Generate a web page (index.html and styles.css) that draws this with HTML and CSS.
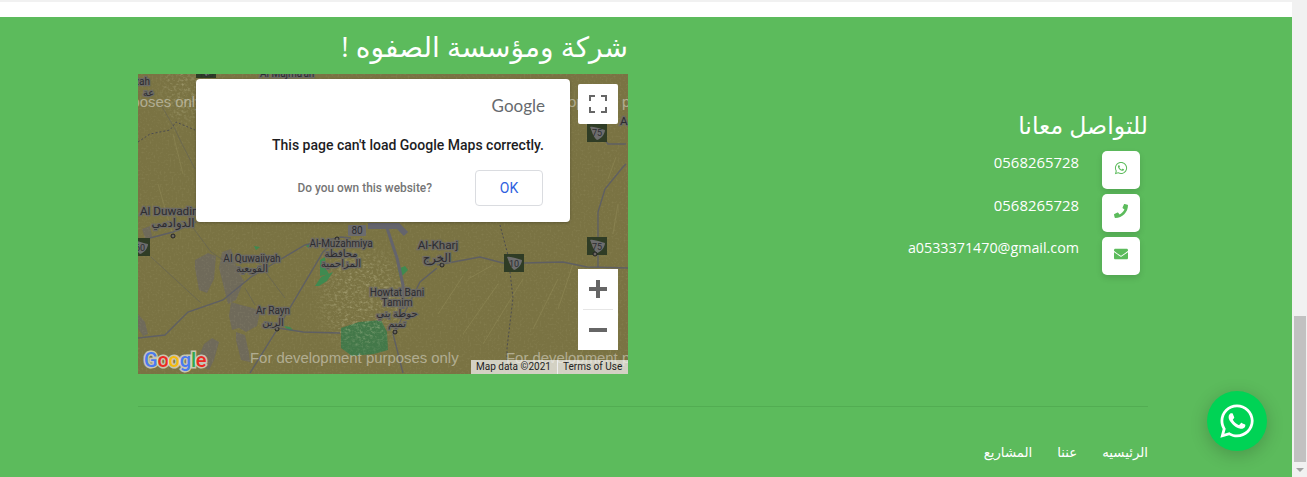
FILE: index.html
```html
<!DOCTYPE html>
<html lang="ar">
<head>
<meta charset="utf-8">
<title>شركة ومؤسسة الصفوه</title>
<link rel="stylesheet" href="styles.css">
</head>
<body>
<div class="window">
  <div class="page">
    <div class="top-strip"></div>
    <footer class="footer">
      <div class="columns">
        <section class="contact">
          <h3 class="contact-title">للتواصل معانا</h3>
          <ul class="contact-list">
            <li class="contact-row">
              <span class="contact-icon"><svg viewBox="0 0 448 512" class="fa"><path d="M380.9 97.1C339 55.1 283.2 32 223.9 32c-122.4 0-222 99.6-222 222 0 39.1 10.2 77.3 29.6 111L0 480l117.7-30.9c32.4 17.7 68.9 27 106.1 27h.1c122.3 0 224.1-99.6 224.1-222 0-59.3-25.2-115-67.1-157zm-157 341.6c-33.2 0-65.7-8.9-94-25.7l-6.7-4-69.8 18.3L72 359.2l-4.4-7c-18.5-29.4-28.2-63.3-28.2-98.2 0-101.7 82.8-184.5 184.6-184.5 49.3 0 95.6 19.2 130.4 54.1 34.8 34.9 56.2 81.2 56.1 130.5 0 101.8-84.9 184.6-186.6 184.6zm101.2-138.2c-5.5-2.8-32.8-16.2-37.9-18-5.1-1.9-8.8-2.8-12.5 2.8-3.7 5.6-14.3 18-17.6 21.8-3.2 3.7-6.5 4.2-12 1.4-32.6-16.3-54-29.1-75.5-66-5.7-9.8 5.7-9.1 16.3-30.3 1.8-3.7.9-6.9-.5-9.7-1.4-2.8-12.5-30.1-17.1-41.2-4.5-10.8-9.1-9.3-12.5-9.5-3.2-.2-6.9-.2-10.6-.2-3.7 0-9.7 1.4-14.8 6.9-5.1 5.6-19.4 19-19.4 46.3 0 27.3 19.9 53.7 22.6 57.4 2.8 3.7 39.1 59.7 94.8 83.8 35.2 15.2 49 16.5 66.6 13.9 10.7-1.6 32.8-13.4 37.4-26.4 4.6-13 4.6-24.1 3.2-26.4-1.3-2.5-5-3.9-10.5-6.6z"/></svg></span>
              <span class="contact-text" dir="ltr">0568265728</span>
            </li>
            <li class="contact-row">
              <span class="contact-icon"><svg viewBox="0 0 512 512" class="fa"><path d="M493.4 24.6l-104-24c-11.3-2.6-22.9 3.3-27.5 13.9l-48 112c-4.2 9.8-1.4 21.3 6.9 28l60.6 49.6c-36 76.7-98.9 140.5-177.2 177.2l-49.6-60.6c-6.8-8.3-18.2-11.1-28-6.9l-112 48C3.9 366.5-2 378.1.6 389.4l24 104C27.1 504.2 36.7 512 48 512c256.1 0 464-207.5 464-464 0-11.2-7.7-20.9-18.6-23.4z"/></svg></span>
              <span class="contact-text" dir="ltr">0568265728</span>
            </li>
            <li class="contact-row">
              <span class="contact-icon"><svg viewBox="0 0 512 512" class="fa"><path d="M502.3 190.8c3.9-3.1 9.7-.2 9.7 4.7V400c0 26.5-21.5 48-48 48H48c-26.5 0-48-21.5-48-48V195.6c0-5 5.7-7.8 9.7-4.7 22.4 17.4 52.1 39.5 154.1 113.6 21.1 15.4 56.7 47.8 92.2 47.6 35.7.3 72-32.8 92.3-47.6 102-74.1 131.6-96.3 154-113.7zM256 320c23.2.4 56.6-29.2 73.4-41.4 132.7-96.3 142.8-104.7 173.4-128.7 5.8-4.5 9.2-11.5 9.2-18.9v-19c0-26.5-21.5-48-48-48H48C21.5 64 0 85.5 0 112v19c0 7.4 3.4 14.3 9.2 18.9 30.6 23.9 40.7 32.4 173.4 128.7 16.8 12.2 50.2 41.8 73.4 41.4z"/></svg></span>
              <span class="contact-text email" dir="ltr">a0533371470@gmail.com</span>
            </li>
          </ul>
        </section>
        <section class="company">
          <h2 class="company-title">شركة ومؤسسة الصفوه !</h2>
          <div class="map" dir="ltr">
            <svg class="map-canvas" viewBox="0 0 490 300" width="490" height="300">
              <defs>
                <filter id="grain" x="0" y="0" width="100%" height="100%">
                  <feTurbulence type="fractalNoise" baseFrequency="0.5" numOctaves="2" seed="4"/>
                  <feColorMatrix type="matrix" values="0 0 0 0 0.7  0 0 0 0 0.66  0 0 0 0 0.42  0 0 0 1.1 -0.55"/>
                </filter>
                <filter id="ridge" x="-30%" y="-30%" width="160%" height="160%">
                  <feGaussianBlur in="SourceAlpha" stdDeviation="9" result="soft"/>
                  <feTurbulence type="fractalNoise" baseFrequency="0.28 0.4" numOctaves="3" seed="11"/>
                  <feColorMatrix type="matrix" values="0 0 0 0 0.8  0 0 0 0 0.78  0 0 0 0 0.52  0 0 0 2 -0.95"/>
                  <feComposite operator="in" in2="soft"/>
                </filter>
                <g id="shield"><rect x="-10" y="-9" width="20" height="18" class="shield-bg"/><path d="M-7-6C-3-7 3-4 8-3 8 1 4 6 0 7-4 4-5-2-7-6z" class="shield-shape"/></g>
              </defs>
              <rect width="490" height="300" class="land"/>

              <path class="rock" d="M57 186l13-7 8 3-2 23-7 14-8-3-4-22z"/>
              <path class="rock" d="M84 178l9-3 7 22 6 10-8 19-8 4-5-20-4-16z"/>
              <path class="rock" d="M93 228l10 3 12 3 7 4-3 14-11 6-7-4-7 2-3-14z"/>
              <path class="rock" d="M98 258l9 3 4 18 1 9-9-2-5-20z"/>
              <path class="rock" d="M66 270l8-6 7 4-5 18-5 10-8-4-3-8z"/>
              <path class="rock" d="M0 240l7 8 3 12-5 2-5-8z"/>
              <path class="rock" d="M4 155l8-3 2 10-5 8z"/>
              <path class="forest" d="M203 254l18-6 22-2 6 12 1 18-14 4-22 2-11-8z"/>

              <rect width="490" height="300" filter="url(#grain)" class="grain"/>
              <ellipse cx="225" cy="225" rx="42" ry="50" filter="url(#ridge)" class="ridge"/>
              <ellipse cx="45" cy="18" rx="20" ry="32" filter="url(#ridge)" class="ridge-soft"/>
              <path class="streak" d="M325 260l35-50M345 270l40-65M300 240l25-38M395 255l25-50M420 235l15-45M440 290l20-60M330 205l25-14M470 290l10-50M475 160l5-30M470 105l8-22M20 110l16 55M35 60l10 40"/>

              <path class="green" d="M182 186l5-3 1 12 3 5-9 2zM177 212l6-9 12-5-6 9-8 5zM116 172l6 1-4 3zM168 172l4-3 2 3-3 2zM146 252l6 1 4 4-6-1zM260 195l7-3 3 4-8 8zM284 170l7-1-2 5-3 0z"/>

              <path class="road" d="M12 164l23-6 23-10M0 264l27-3 13-13 10-10 35-12 28-23 20-12 34-20 36-8 10 1M112 299l28-45 45-76 15-14M299 191l43-8 23 6h20l40-1 24 5 41 1M463 61l7 9h18M488 90l-3 3-18 22-7 23v56M299 194l-17 14-10 20-13 26-4 6 10 39M140 254l25 4 37 1"/>
              <path class="road-thick" d="M249 154l10 30 6 27v24"/>
              <path class="road-thick wide" d="M230 152h30l8 8"/>
              <path class="road-thin" d="M23 31l14 24 6 13 14 27M53 151l20 27 12 8M13 183l50 46M120 188l27 36M107 214l10 17"/>
              <path class="boundary" d="M362 151l8 30 5 43-6 50v14M0 68l12-8 20-4 6-8 19 8"/>

              <rect x="210" y="151" width="18" height="11" rx="1" class="pill"/>
              <text x="219" y="160" class="label small mid">80</text>

              <use href="#shield" x="2" y="173"/><text x="2" y="177" class="label tiny mid">60</text>
              <use href="#shield" x="376" y="189"/><text x="376" y="193" class="label tiny mid">10</text>
              <use href="#shield" x="459" y="172"/><text x="459" y="176" class="label tiny mid">75</text>
              <use href="#shield" x="459" y="59"/><text x="459" y="62" class="label tiny mid">75</text>
              <use href="#shield" x="68" y="-5"/><text x="68" y="3" class="label tiny mid">165</text>

              <circle cx="35" cy="162" r="2" class="city"/><circle cx="121" cy="195" r="2" class="city"/>
              <circle cx="199" cy="165" r="2" class="city"/><circle cx="139" cy="255" r="2" class="city"/>
              <circle cx="304" cy="191" r="2" class="city"/><circle cx="257" cy="258" r="2" class="city"/>
              <circle cx="457" cy="180" r="2" class="city"/>

              <text x="-4" y="11" class="label">zah</text>
              <text x="5" y="22" class="label ar">عة</text>
              <text x="122" y="3" class="label">Al Majma'ah</text>
              <text x="482" y="51" class="label big">A</text>
              <text x="2" y="141" class="label big">Al Duwadimi</text>
              <text x="35" y="153" class="label big ar mid">الدوادمي</text>
              <text x="203" y="173" class="label mid">Al-Muzahmiya</text>
              <text x="203" y="183" class="label ar mid">محافظة</text>
              <text x="203" y="193" class="label ar mid">المزاحمية</text>
              <text x="114" y="188" class="label mid">Al Quwaiiyah</text>
              <text x="114" y="198" class="label ar mid">القويعية</text>
              <text x="135" y="240" class="label mid">Ar Rayn</text>
              <text x="135" y="252" class="label ar mid">الرين</text>
              <text x="259" y="222" class="label mid">Howtat Bani</text>
              <text x="259" y="232" class="label mid">Tamim</text>
              <text x="259" y="243" class="label ar mid">حوطة بني</text>
              <text x="259" y="253" class="label ar mid">تميم</text>
              <text x="300" y="175" class="label big mid">Al-Kharj</text>
              <text x="299" y="188" class="label big ar mid">الخرج</text>

              <text x="-144" y="33" class="dev">For development purposes only</text>
              <text x="112" y="33" class="dev">For development purposes only</text>
              <text x="368" y="33" class="dev">For development purposes only</text>
              <text x="112" y="289" class="dev">For development purposes only</text>
              <text x="368" y="289" class="dev">For development purposes only</text>

              <text x="6" y="293" class="g-logo"><tspan class="g-blue">G</tspan><tspan class="g-red">o</tspan><tspan class="g-yellow">o</tspan><tspan class="g-blue">g</tspan><tspan class="g-green">l</tspan><tspan class="g-red">e</tspan></text>
            </svg>

            <div class="attribution">
              <span class="attr-item">Map data ©2021</span>
              <span class="attr-item attr-terms">Terms of Use</span>
            </div>

            <button class="map-btn fullscreen" aria-label="Full screen">
              <svg viewBox="0 0 18 18" width="18" height="18"><path class="ctl" d="M0 6V0h6v2H2v4zM12 0h6v6h-2V2h-4zM0 12h2v4h4v2H0zM16 12h2v6h-6v-2h4z"/></svg>
            </button>
            <div class="zoom-ctl">
              <button class="zoom-btn" aria-label="Zoom in"><svg viewBox="0 0 18 18" width="18" height="18"><path class="ctl" d="M7 0h4v7h7v4h-7v7H7v-7H0V7h7z"/></svg></button>
              <span class="zoom-sep"></span>
              <button class="zoom-btn" aria-label="Zoom out"><svg viewBox="0 0 18 18" width="18" height="18"><path class="ctl" d="M0 7h18v4H0z"/></svg></button>
            </div>

            <div class="dialog">
              <div class="dialog-logo">Google</div>
              <p class="dialog-msg">This page can't load Google Maps correctly.</p>
              <div class="dialog-actions">
                <span class="dialog-own">Do you own this website?</span>
                <span class="dialog-ok">OK</span>
              </div>
            </div>
          </div>
        </section>
      </div>
      <nav class="footer-nav">
        <a class="nav-link">الرئيسيه</a>
        <a class="nav-link">عننا</a>
        <a class="nav-link">المشاريع</a>
      </nav>
    </footer>
    <a class="wa-fab" aria-label="WhatsApp"><svg viewBox="0 0 448 512" class="wa-icon"><path d="M380.9 97.1C339 55.1 283.2 32 223.9 32c-122.4 0-222 99.6-222 222 0 39.1 10.2 77.3 29.6 111L0 480l117.7-30.9c32.4 17.7 68.9 27 106.1 27h.1c122.3 0 224.1-99.6 224.1-222 0-59.3-25.2-115-67.1-157zm-157 341.6c-33.2 0-65.7-8.9-94-25.7l-6.7-4-69.8 18.3L72 359.2l-4.4-7c-18.5-29.4-28.2-63.3-28.2-98.2 0-101.7 82.8-184.5 184.6-184.5 49.3 0 95.6 19.2 130.4 54.1 34.8 34.9 56.2 81.2 56.1 130.5 0 101.8-84.9 184.6-186.6 184.6zm101.2-138.2c-5.5-2.8-32.8-16.2-37.9-18-5.1-1.9-8.8-2.8-12.5 2.8-3.7 5.6-14.3 18-17.6 21.8-3.2 3.7-6.5 4.2-12 1.4-32.6-16.3-54-29.1-75.5-66-5.7-9.8 5.7-9.1 16.3-30.3 1.8-3.7.9-6.9-.5-9.7-1.4-2.8-12.5-30.1-17.1-41.2-4.5-10.8-9.1-9.3-12.5-9.5-3.2-.2-6.9-.2-10.6-.2-3.7 0-9.7 1.4-14.8 6.9-5.1 5.6-19.4 19-19.4 46.3 0 27.3 19.9 53.7 22.6 57.4 2.8 3.7 39.1 59.7 94.8 83.8 35.2 15.2 49 16.5 66.6 13.9 10.7-1.6 32.8-13.4 37.4-26.4 4.6-13 4.6-24.1 3.2-26.4-1.3-2.5-5-3.9-10.5-6.6z"/></svg></a>
  </div>
  <div class="scrollbar">
    <span class="sb-track"><span class="sb-thumb"></span></span>
    <span class="sb-arrow"></span>
  </div>
</div>
</body>
</html>
```
FILE: styles.css
```css
* { box-sizing: border-box; }
html, body { margin: 0; padding: 0; height: 100%; overflow: hidden; }
body { font-family: "Open Sans", "DejaVu Sans", sans-serif; color: #fff; }

.window { display: flex; width: 1307px; height: 477px; overflow: hidden; }
.page { position: relative; flex: 1; min-width: 0; background: #fff; }
.top-strip { height: 17px; background: #fff; border-top: 2px solid #f1f1f1; }

.footer { height: 460px; background: #5cbb5c; padding: 0 144px 0 138px; direction: rtl; }
.columns { display: flex; justify-content: space-between; height: 390px; border-bottom: 1px solid #52ad52; }

.contact { padding-top: 93px; width: 300px; }
.contact-title { margin: 0 0 11px; font-size: 23.6px; font-weight: 400; line-height: 30px; text-align: right; }
.contact-list { list-style: none; margin: 0; padding: 0 8px 0 0; display: flex; flex-direction: column; gap: 5px; }
.contact-row { display: flex; gap: 23px; align-items: flex-start; height: 38px; }
.contact-icon { flex: none; width: 38px; height: 38px; border-radius: 5px; background: #fff; display: flex; align-items: center; justify-content: center; padding-bottom: 5px; box-shadow: 0 3px 6px rgba(0,0,0,.12); }
.fa { width: 14px; height: 14px; fill: #5cbb5c; }
.contact-text { font-size: 14.9px; line-height: 22px; }
.contact-text.email { font-size: 14.3px; }

.company { width: 490px; }
.company-title { margin: 12px 0 11px; font-size: 28px; font-weight: 400; line-height: 34px; text-align: right; }

.map { position: relative; width: 490px; height: 300px; overflow: hidden; font-family: Roboto, sans-serif; direction: ltr; }
.map-canvas { display: block; }
.land { fill: #7a7343; }
.grain { opacity: .25; }
.ridge { opacity: .4; }
.ridge-soft { opacity: .35; }
.streak { fill: none; stroke: #a39a66; stroke-width: 1; opacity: .3; }
.rock { fill: #6f6a5a; }
.forest { fill: #437849; }
.green { fill: #3f8a50; }
.road { fill: none; stroke: #5c5d66; stroke-width: 1.4; opacity: .9; }
.road-thick { fill: none; stroke: #64646c; stroke-width: 3; }
.road-thick.wide { stroke-width: 6; }
.road-thin { fill: none; stroke: #5f6058; stroke-width: .7; opacity: .8; }
.boundary { fill: none; stroke: #4c4c50; stroke-width: 1; stroke-dasharray: 2 2; }
.pill { fill: #6b6b6e; }
.shield-bg { fill: #2f3c25; }
.shield-shape { fill: #6d6d6d; }
.city { fill: #6b6760; stroke: #222; stroke-width: 1; }

.label { font: 10px Roboto, "DejaVu Sans", sans-serif; fill: #2c2c30; stroke: #6c6a64; stroke-width: 2.5px; paint-order: stroke; }
.label.big { font-size: 11.7px; }
.label.small { font-size: 10px; stroke: none; }
.label.tiny { font-size: 9px; stroke: none; }
.mid { text-anchor: middle; }
.dev { font: 14.9px "Liberation Sans", sans-serif; fill: rgba(255,255,255,.42); }
.g-logo { font: 500 20px Roboto, sans-serif; stroke: rgba(235,235,225,.7); stroke-width: 3px; paint-order: stroke; letter-spacing: -.2px; }
.g-blue { fill: #4a7af0; }
.g-red { fill: #ec2a22; }
.g-yellow { fill: #f5bb10; }
.g-green { fill: #2fa84f; }

.attribution { position: absolute; right: 0; bottom: 0; height: 14px; width: 157px; display: flex; background: rgba(245,245,245,.72); color: #222; font-size: 10px; line-height: 14px; }
.attr-item { padding: 0 0 0 5px; width: 86px; }
.attr-terms { flex: 1; border-left: 1px solid #eee; width: auto; }

.map-btn, .zoom-btn { border: 0; padding: 0; background: #fff; display: flex; align-items: center; justify-content: center; }
.fullscreen { position: absolute; left: 440px; top: 10px; width: 40px; height: 40px; border-radius: 2px; }
.ctl { fill: #666; }
.zoom-ctl { position: absolute; left: 440px; top: 195px; width: 40px; height: 81px; background: #fff; border-radius: 2px; display: flex; flex-direction: column; align-items: center; }
.zoom-btn { width: 40px; height: 40px; }
.zoom-sep { display: block; width: 30px; height: 1px; background: #e6e6e6; }

.dialog { position: absolute; left: 58px; top: 5px; width: 374px; height: 143px; background: #fff; border-radius: 4px; padding: 15px 25px 0 26px; box-shadow: 0 1px 3px rgba(0,0,0,.25); text-align: right; }
.dialog-logo { font: 400 17px Lato, sans-serif; color: #666a6e; line-height: 24px; }
.dialog-msg { margin: 17px 1px 0 0; color: #1d1d1f; font: 500 14px/20px Roboto, sans-serif; }
.dialog-actions { display: flex; justify-content: flex-end; align-items: center; gap: 43px; margin: 15px 2px 0 0; }
.dialog-own { color: #757575; font: 500 11.9px Roboto, sans-serif; }
.dialog-ok { width: 68px; height: 36px; border: 1px solid #dadce0; border-radius: 4px; color: #2f5fe0; font: 400 14px/34px Roboto, sans-serif; text-align: center; }

.footer-nav { display: flex; gap: 25px; padding-top: 35px; font-size: 13.3px; line-height: 20px; }
.nav-link { color: #fff; }

.wa-fab { position: absolute; left: 1207px; top: 391px; width: 60px; height: 60px; border-radius: 50%; background: #00d355; box-shadow: 0 4px 18px rgba(0,0,0,.2); display: flex; align-items: center; justify-content: center; }
.wa-icon { width: 34px; height: 38px; fill: #fff; }

.scrollbar { width: 15px; flex: none; background: #f1f1f1; display: flex; flex-direction: column; align-items: center; }
.sb-track { flex: 1; width: 100%; padding: 316px 1px 0 2px; display: block; }
.sb-thumb { display: block; height: 146px; background: #c1c1c1; }
.sb-arrow { width: 0; height: 0; margin: 0 0 5px; border-left: 4px solid transparent; border-right: 4px solid transparent; border-top: 4px solid #a3a3a3; }
```
